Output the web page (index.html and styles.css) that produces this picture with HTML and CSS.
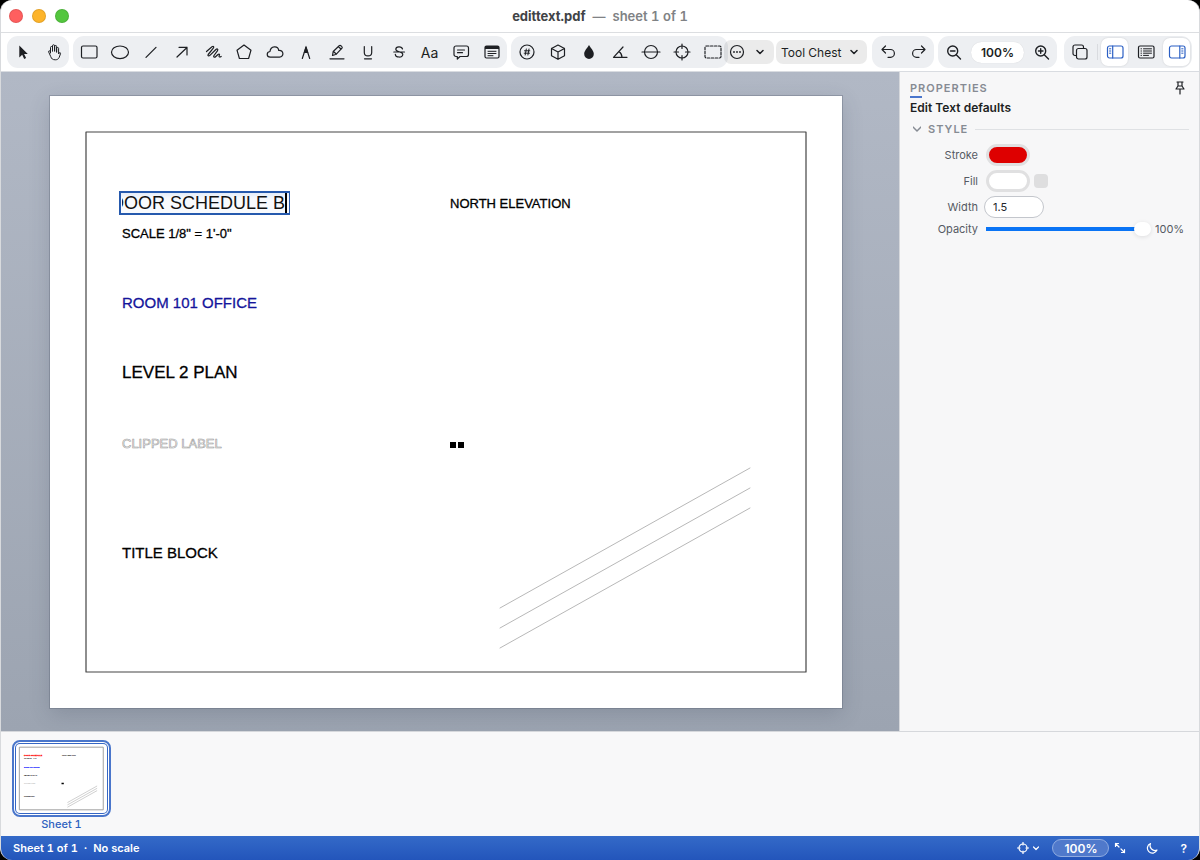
FILE: index.html
```html
<!DOCTYPE html>
<html lang="en">
<head>
<meta charset="utf-8">
<title>edittext.pdf — sheet 1 of 1</title>
<link rel="stylesheet" href="styles.css">
</head>
<body>
<div class="window">
  <header class="titlebar">
    <div class="lights">
      <button class="light light-close" aria-label="Close"></button>
      <button class="light light-min" aria-label="Minimize"></button>
      <button class="light light-max" aria-label="Zoom window"></button>
    </div>
    <h1 class="title">edittext.pdf <span class="title-sub">&nbsp;—&nbsp; sheet 1 of 1</span></h1>
  </header>

  <nav class="toolbar" aria-label="Tools">
    <div class="group">
      <button class="tool" aria-label="Select"><svg class="icon" viewBox="0 0 20 20"><path class="solid" d="M6.300 3.500v12l2.900-2.700 2 4.200 1.900-.9-2-4h3.700z"/></svg></button>
      <button class="tool" aria-label="Pan"><svg class="icon thin" viewBox="0 0 20 20"><path d="M6.500 11V5.500a1 1 0 0 1 2 0V9M8.500 9V3.800a1 1 0 0 1 2.100 0V9M10.600 9V4.500a1 1 0 0 1 2 0V10M12.600 10V6.500a1 1 0 0 1 2 0V12l.6-1c.6-.9 1.600-.3 1.300.7l-1.300 3.700c-.8 1.600-1.900 2.400-3.900 2.400-2.700 0-3.800-1-4.600-3.300L4.600 9.800c-.3-1 .9-1.500 1.400-.6l.5 1.300"/></svg></button>
    </div>

    <div class="group">
      <button class="tool" aria-label="Rectangle"><svg class="icon" viewBox="0 0 20 20"><rect x="2.500" y="4" width="15.500" height="12" rx="1.500"/></svg></button>
      <button class="tool" aria-label="Ellipse"><svg class="icon" viewBox="0 0 20 20"><ellipse cx="10" cy="10.300" rx="8.500" ry="6.300"/></svg></button>
      <button class="tool" aria-label="Line"><svg class="icon" viewBox="0 0 20 20"><path d="M5 15.300 15 5.300"/></svg></button>
      <button class="tool" aria-label="Arrow"><svg class="icon" viewBox="0 0 20 20"><path d="M5 15 15 5.500M7 5.300h8V13"/></svg></button>
      <button class="tool" aria-label="Scribble"><svg class="icon" viewBox="0 0 20 20"><path d="M3.500 9.500 9 4.700c1.500-1 2.300.2 1.300 1.500L5.200 12.500c-.8 1.300.5 2 1.700.8l6-5.800c1.500-1.200 2.500 0 1.500 1.300L11 13.500c-1 1.600.5 2.300 1.800 1l2.200-2c1.200-1 2 0 1.200 1.200-.6 1.200.5 1.800 2 .8"/></svg></button>
      <button class="tool" aria-label="Polygon"><svg class="icon" viewBox="0 0 20 20"><path d="M10 3 17 8.200 14.600 16.500H5.400L3 8.200z"/></svg></button>
      <button class="tool" aria-label="Cloud"><svg class="icon" viewBox="0 0 20 20"><path d="M5.300 15.200C1.300 15 1.200 10 5 9.500 5.600 3.700 13 3.500 13.700 8.300c5.300-.4 5.600 6.700.8 6.900z"/></svg></button>
      <button class="tool" aria-label="Pen"><svg class="icon" viewBox="0 0 20 20"><path d="M6.300 16.500 10 5l3.700 11.500"/><path class="solid" d="M10 3.500 7.700 11h4.600z"/></svg></button>
      <button class="tool" aria-label="Highlight"><svg class="icon" viewBox="0 0 20 20"><path d="M3 16.800h14M5.500 13.500l.7-4 6-5.800c1.200-1 3.800 1.200 2.800 2.500l-5.700 6zM6.500 9.500l3 2.700M11.500 4.800l2.700 2.400"/></svg></button>
      <button class="tool" aria-label="Underline"><svg class="icon" viewBox="0 0 20 20"><path d="M6.300 4.500v6c0 4.600 7.400 4.600 7.400 0v-6M6.500 16.800h7"/></svg></button>
      <button class="tool" aria-label="Strikethrough"><svg class="icon" viewBox="0 0 20 20"><path d="M13.500 7c-.7-3-6.700-2.700-6.700.3 0 3.200 7 1.600 7 5.200 0 3.400-7 3.400-7.500-.2M4.800 10h10.700"/></svg></button>
      <button class="tool tool-text" aria-label="Text">Aa</button>
      <button class="tool" aria-label="Comment"><svg class="icon" viewBox="0 0 20 20"><path d="M5 4h10.500a2 2 0 0 1 2 2v6.500a2 2 0 0 1-2 2H9L6.300 17v-2.500H5a2 2 0 0 1-2-2V6a2 2 0 0 1 2-2zM6.500 8h7M6.500 10.700h5"/></svg></button>
      <button class="tool" aria-label="Note"><svg class="icon" viewBox="0 0 20 20"><rect x="3" y="4" width="14" height="12" rx="1.500"/><path class="solid" d="M3 4h14v3H3z"/><path class="thin" d="M6 9.300h8M6 11.500h8M6 13.700h5"/></svg></button>
    </div>

    <div class="group group-measure">
      <button class="tool" aria-label="Count"><svg class="icon" viewBox="0 0 20 20"><circle cx="10" cy="10" r="7"/><path class="thin" d="M9.300 7 8.200 13M12 7l-1.100 6M7.500 8.800h5.300M7.200 11.200h5.300"/></svg></button>
      <button class="tool" aria-label="Volume"><svg class="icon" viewBox="0 0 20 20"><path d="M10 3l6.500 3.500v7.300L10 17.300l-6.500-3.500V6.500zM3.500 6.500 10 10l6.500-3.500M10 10v7.300"/></svg></button>
      <button class="tool" aria-label="Fill color"><svg class="icon" viewBox="0 0 20 20"><path class="solid" d="M10 3c2 3.500 4.800 5.800 4.800 9a4.800 5 0 0 1-9.600 0c0-3.200 2.800-5.500 4.800-9z"/></svg></button>
      <button class="tool" aria-label="Angle"><svg class="icon" viewBox="0 0 20 20"><path d="M13 5 3.500 15.300H17M9 9.500c2 1.500 3 3.500 3 5.800"/></svg></button>
      <button class="tool" aria-label="Diameter"><svg class="icon" viewBox="0 0 20 20"><circle cx="10" cy="10" r="6.500"/><path d="M1 10h18"/></svg></button>
      <button class="tool" aria-label="Calibrate"><svg class="icon" viewBox="0 0 20 20"><circle cx="10" cy="10" r="6"/><path d="M10 2v4.500M10 13.500V18M2 10h4.500M13.500 10H18"/></svg></button>
      <button class="tool" aria-label="Snapshot"><svg class="icon" viewBox="0 0 20 20"><rect x="2" y="4" width="16" height="12" rx="1.500" stroke-dasharray="2.500 1.500"/></svg></button>
    </div>

    <button class="menu menu-more" aria-label="More tools"><svg class="icon" viewBox="0 0 20 20"><circle cx="10" cy="10" r="6.500"/><path class="dots" d="M7 10h0M10 10h0M13 10h0"/></svg><svg class="chevron" viewBox="0 0 8 8"><path d="M1 2.500 4 5.500 7 2.500"/></svg></button>
    <button class="menu menu-chest">Tool Chest<svg class="chevron" viewBox="0 0 8 8"><path d="M1 2.500 4 5.500 7 2.500"/></svg></button>

    <div class="group group-history">
      <button class="tool" aria-label="Undo"><svg class="icon" viewBox="0 0 20 20"><path d="M7.500 4 4 7.500 7.500 11M4 7.500h8.500a3.900 3.900 0 0 1 0 7.800H10"/></svg></button>
      <button class="tool" aria-label="Redo"><svg class="icon" viewBox="0 0 20 20"><path d="M12.500 4 16 7.500 12.500 11M16 7.500H7.500a3.900 3.900 0 0 0 0 7.800H10"/></svg></button>
    </div>

    <div class="group">
      <button class="tool" aria-label="Zoom out"><svg class="icon lens" viewBox="0 0 20 20"><circle cx="8.700" cy="9" r="5"/><path d="M12.500 13l4 4M6.500 9h4.500"/></svg></button>
      <button class="zoom-value">100%</button>
      <button class="tool" aria-label="Zoom in"><svg class="icon lens" viewBox="0 0 20 20"><circle cx="8.700" cy="9" r="5"/><path d="M12.500 13l4 4M6.500 9h4.500M8.700 6.700v4.500"/></svg></button>
    </div>

    <div class="group group-views">
      <button class="tool" aria-label="Windows"><svg class="icon" viewBox="0 0 20 20"><rect x="6.500" y="6.500" width="10.500" height="10.500" rx="2"/><path d="M6.500 13.500H5a2 2 0 0 1-2-2V5a2 2 0 0 1 2-2h6.500a2 2 0 0 1 2 2v1.500"/></svg></button>
      <span class="divider"></span>
      <button class="tool tool-on" aria-label="Left panel" aria-pressed="true"><svg class="icon" viewBox="0 0 20 20"><rect x="2.500" y="4" width="15.500" height="12" rx="2"/><path d="M7.700 4v12"/><path class="thin" d="M4.500 6.800h1.300M4.500 9h1.300M4.500 11.200h1.300"/></svg></button>
      <button class="tool" aria-label="Markup list"><svg class="icon" viewBox="0 0 20 20"><rect x="2.500" y="4" width="15.500" height="12" rx="1.500"/><path class="thin" d="M5 6.800h.5M7.500 6.800h8M5 9h.5M7.500 9h8M5 11.200h.5M7.500 11.200h8M5 13.400h.5M7.500 13.400h5"/></svg></button>
      <button class="tool tool-on" aria-label="Right panel" aria-pressed="true"><svg class="icon" viewBox="0 0 20 20"><rect x="2.500" y="4" width="15.500" height="12" rx="2"/><path d="M12.800 4v12"/><path class="thin" d="M14.700 6.800H16M14.700 9H16M14.700 11.200H16"/></svg></button>
    </div>
  </nav>

  <div class="workspace">
    <main class="canvas">
      <div class="page">
        <svg class="sheet" viewBox="0 0 792 612" role="img" aria-label="Sheet 1">
          <rect class="frame" x="36" y="36" width="720" height="540"/>
          <path class="hatch" d="M450 512 700 372M450 532 700 392M450 552 700 412"/>
          <path class="block" d="M400 346h6v6h-6zM408 346h6v6h-6z"/>
          <g class="labels">
            <text x="400" y="112" class="t13">NORTH ELEVATION</text>
            <text x="72" y="142" class="t13">SCALE 1/8" = 1'-0"</text>
            <text x="72" y="212" class="t15 blue">ROOM 101 OFFICE</text>
            <text x="72" y="282" class="t17">LEVEL 2 PLAN</text>
            <text x="72" y="352" class="t13 outline">CLIPPED LABEL</text>
            <text x="72" y="462" class="t15">TITLE BLOCK</text>
          </g>
        </svg>
        <div class="edit-box">
          <input class="edit-input" type="text" value="DOOR SCHEDULE B" aria-label="Edit text">
          <span class="caret"></span>
        </div>
      </div>
    </main>

    <aside class="panel">
      <div class="panel-head">
        <h2 class="panel-title">PROPERTIES</h2>
        <button class="pin" aria-label="Pin panel"><svg class="pin-icon" viewBox="0 0 12 14"><path d="M3 1h6M4 1v4L2 8h8L8 5V1M4 5h4M6 8v5"/></svg></button>
      </div>
      <h3 class="panel-subject">Edit Text defaults</h3>
      <button class="section"><svg class="chevron" viewBox="0 0 8 8"><path d="M0 2 4 6 8 2"/></svg><span>STYLE</span><span class="rule"></span></button>
      <div class="fields">
        <label for="stroke">Stroke</label>
        <div class="row"><button id="stroke" class="swatch swatch-red"></button></div>
        <label for="fill">Fill</label>
        <div class="row"><button id="fill" class="swatch"></button><input class="fill-on" type="checkbox" aria-label="Use fill"></div>
        <label for="width">Width</label>
        <div class="row"><input id="width" class="number" type="text" value="1.5"></div>
        <label for="opacity">Opacity</label>
        <div class="row"><input id="opacity" class="slider" type="range" min="0" max="100" value="100"><span class="percent">100%</span></div>
      </div>
    </aside>
  </div>

  <section class="strip" aria-label="Sheets">
    <button class="thumb">
      <span class="thumb-frame">
        <svg class="thumb-page" viewBox="0 0 792 612" aria-hidden="true">
          <rect class="thumb-border" x="36" y="36" width="720" height="540"/>
          <path class="thumb-hatch" d="M450 512 700 372M450 532 700 392M450 552 700 412"/>
          <path class="block" d="M396 342h20v14h-20z"/>
          <g class="labels">
            <text x="72" y="112" class="t18 thumb-red">DOOR SCHEDULE</text>
            <text x="400" y="112" class="t13">NORTH ELEVATION</text>
            <text x="72" y="142" class="t13">SCALE 1/8" = 1'-0"</text>
            <text x="72" y="212" class="t15 thumb-blue">ROOM 101 OFFICE</text>
            <text x="72" y="282" class="t17">LEVEL 2 PLAN</text>
            <text x="72" y="352" class="t13 outline">CLIPPED LABEL</text>
            <text x="72" y="462" class="t15">TITLE BLOCK</text>
          </g>
        </svg>
      </span>
      <span class="thumb-name">Sheet 1</span>
    </button>
  </section>

  <footer class="status">
    <span class="status-text">Sheet 1 of 1 &nbsp;·&nbsp; No scale</span>
    <button class="status-btn status-snap" aria-label="Snap"><svg class="status-icon" viewBox="0 0 12 12"><circle cx="6" cy="6" r="4"/><path d="M6 0v3M6 9v3M0 6h3M9 6h3"/></svg><svg class="status-chevron" viewBox="0 0 8 8"><path d="M1.500 3 4 5.500 6.500 3"/></svg></button>
    <button class="status-zoom">100%</button>
    <button class="status-btn status-fit" aria-label="Fit"><svg class="status-icon" viewBox="0 0 12 12"><path d="M1.500 4.500v-3h3M1.500 1.500 5 5M10.500 7.500v3h-3M10.500 10.500 7 7"/></svg></button>
    <button class="status-btn status-theme" aria-label="Dark mode"><svg class="status-icon" viewBox="0 0 12 12"><path d="M4.500 1.500a5 5 0 1 0 6.500 6.600A5 5 0 0 1 4.500 1.500z"/></svg></button>
    <button class="status-btn status-help" aria-label="Help">?</button>
  </footer>
</div>
</body>
</html>
```
FILE: styles.css
```css
* { box-sizing: border-box; }

html, body { height: 100%; }

body {
  margin: 0;
  background: #000;
  font-family: Inter, "Liberation Sans", sans-serif;
  font-size: 12px;
  font-variant-numeric: tabular-nums;
  color: #1d1f23;
}

button, input { font: inherit; font-variant-numeric: inherit; color: inherit; }

button {
  margin: 0;
  padding: 0;
  border: 0;
  background: none;
}

h1, h2, h3 { margin: 0; }

svg {
  display: block;
  fill: none;
  stroke: currentColor;
  stroke-width: 1.2;
  stroke-linecap: round;
  stroke-linejoin: round;
}

.window {
  display: flex;
  flex-direction: column;
  height: 100vh;
  overflow: hidden;
  border-radius: 12px;
  background: #fff;
  border-left: 1px solid #d8dadd;
  border-right: 1px solid #d8dadd;
}

/* Title bar */
.titlebar {
  display: grid;
  grid-template-columns: 1fr auto 1fr;
  align-items: center;
  flex: none;
  height: 33px;
  padding: 0 8px;
  border-bottom: 1px solid #dcdee1;
}
.lights { display: flex; gap: 9px; }
.light {
  width: 14px;
  height: 14px;
  border-radius: 50%;
  border: 1px solid rgba(0, 0, 0, .1);
}
.light-close { background: #ff5f5f; }
.light-min { background: #fdb42a; }
.light-max { background: #53c63e; }
.title { font-size: 13px; font-weight: 700; color: #414346; }
.title-sub { color: #808285; font-weight: 600; }

/* Toolbar */
.toolbar {
  display: flex;
  align-items: center;
  flex: none;
  height: 39px;
  padding: 0 7px 0 6px;
  border-bottom: 1px solid #d9dce1;
}
.group {
  display: flex;
  align-items: center;
  flex: none;
  gap: 4px;
  height: 32px;
  margin-right: 4px;
  padding: 0 2px;
  border-radius: 11px;
  background: #edeff2;
}
.tool {
  display: flex;
  align-items: center;
  justify-content: center;
  flex: none;
  width: 27px;
  height: 28px;
  border-radius: 7px;
}
.tool-text { font-size: 14px; }
.tool-on {
  color: #2a5fc4;
  background: #fff;
  box-shadow: 0 0 2px rgba(0, 0, 0, .15);
}
.icon { width: 20px; height: 20px; }
.thin { stroke-width: 1; }
.lens { stroke-width: 1.4; }
.solid { fill: currentColor; stroke-width: 0; }
.dots { stroke-width: 1.8; }
.chevron { width: 8px; height: 8px; stroke-width: 1.5; }

.group-measure { margin-right: 0; }
.menu {
  display: flex;
  align-items: center;
  justify-content: space-between;
  flex: none;
  height: 24px;
  border-radius: 7px;
  background: rgba(0, 0, 0, .08);
}
.menu-more { width: 50px; margin-left: -4px; margin-right: 2px; padding: 0 10px 0 3px; }
.menu-chest { width: 91px; margin-right: 5px; padding: 0 9px 0 5px; }
.zoom-value {
  width: 53px;
  height: 21px;
  border-radius: 11px;
  background: #fff;
  font-weight: 600;
  font-variant-numeric: normal;
  box-shadow: 0 0 1px rgba(0, 0, 0, .15);
}
.group-views { margin-left: auto; margin-right: 0; }
.divider { width: 1px; height: 16px; margin-right: -1px; background: #d9dbdf; }

/* Workspace */
.workspace { display: flex; flex: 1; min-height: 0; }
.canvas {
  flex: 1;
  min-width: 0;
  padding: 24px 49px;
  overflow: hidden;
  background: linear-gradient(#b1b8c5, #9ca4b1);
}
.page {
  position: relative;
  width: 792px;
  background: #fff;
  box-shadow: 0 0 0 1px rgba(90, 98, 115, .35), 0 6px 20px rgba(50, 60, 80, .2);
}
.sheet { width: 100%; height: auto; }
.frame { stroke: #444; }
.hatch { stroke: #b8b8b8; stroke-width: 1; }
.block { fill: #000; stroke: none; }
.labels {
  font-family: "Liberation Sans", sans-serif;
  fill: #000;
  stroke: #000;
  stroke-width: .3;
}
.t13 { font-size: 13px; }
.t15 { font-size: 15px; }
.t17 { font-size: 17px; }
.t18 { font-size: 18px; }
.blue { fill: #15159b; stroke: #15159b; }
.outline { fill: #fff; stroke: #999; stroke-width: .6; }

.edit-box {
  position: absolute;
  left: 69px;
  top: 95px;
  display: flex;
  align-items: center;
  width: 171px;
  height: 24px;
  padding: 0 2px 0 1px;
  border: 2px solid #2559ad;
  border-right-width: 1px;
  background: linear-gradient(#e3ecf9, #f8fafd 6px);
}
.edit-input {
  flex: 1;
  min-width: 0;
  height: 20px;
  padding: 0;
  border: 0;
  outline: 0;
  background: none;
  font-family: "Liberation Sans", sans-serif;
  font-size: 18px;
  color: #111;
  direction: rtl;
}
.caret { width: 2px; height: 20px; background: #000; }

/* Properties panel */
.panel {
  display: flex;
  flex-direction: column;
  flex: none;
  width: 300px;
  padding: 9px 10px;
  border-left: 1px solid #d6d8dc;
  background: #f7f7f8;
}
.panel-head { display: flex; justify-content: space-between; align-items: flex-start; }
.panel-title {
  position: relative;
  padding-bottom: 2px;
  font-size: 11px;
  line-height: 15px;
  font-weight: 600;
  letter-spacing: 1px;
  color: #868b93;
}
.panel-title::after {
  content: "";
  position: absolute;
  left: 0;
  bottom: 0;
  width: 12px;
  height: 2px;
  background: #4a76cc;
}
.pin { padding: 0 3px; }
.pin-icon { width: 12px; height: 14px; }
.panel-subject { margin-top: 2px; font-size: 12px; line-height: 16px; font-weight: 600; }
.section {
  display: flex;
  align-items: center;
  gap: 7px;
  height: 16px;
  margin: 5px 0;
  padding-left: 3px;
  font-size: 11px;
  font-weight: 600;
  letter-spacing: 1px;
  color: #868b93;
}
.rule { flex: 1; height: 1px; background: #dfe1e4; }
.fields {
  display: grid;
  grid-template-columns: 68px 1fr;
  grid-template-rows: 26px 26px 26px 18px;
  column-gap: 6px;
  align-items: center;
  font-size: 11px;
  font-variant-numeric: normal;
  color: #555a63;
}
.fields label { text-align: right; }
.row { display: flex; align-items: center; gap: 4px; }
.swatch {
  width: 44px;
  height: 22px;
  margin-left: 2px;
  border: 3px solid #e0e0e1;
  border-radius: 11px;
  background: #fff;
}
.swatch-red { background: #de0000; }
.fill-on {
  appearance: none;
  width: 14px;
  height: 14px;
  margin: 0;
  border-radius: 4px;
  background: #dededf;
}
.number {
  width: 60px;
  height: 22px;
  padding: 0 8px;
  border: 1px solid #c3c6cc;
  border-radius: 11px;
  background: #fff;
  color: #24262a;
}
.slider {
  appearance: none;
  flex: none;
  width: 165px;
  height: 16px;
  margin: 0 0 0 2px;
  background: linear-gradient(#0a74f5, #0a74f5) no-repeat left center / 155px 4px;
}
.slider::-webkit-slider-thumb {
  appearance: none;
  width: 17px;
  height: 14px;
  border-radius: 7px;
  background: #fff;
  box-shadow: 0 1px 4px rgba(0, 0, 0, .1);
}

/* Sheet strip */
.strip {
  display: flex;
  flex: none;
  height: 105px;
  padding: 8px 11px;
  border-top: 1px solid #d6d8dc;
  background: #f8f8f9;
}
.thumb { display: flex; flex-direction: column; align-items: center; justify-content: flex-start; }
.thumb-frame {
  padding: 1px;
  border: 2px solid #4a76cb;
  border-radius: 8px;
  background: #fff;
}
.thumb-page {
  width: 93px;
  height: 71px;
  border-radius: 5px;
  box-shadow: inset 0 0 0 1px #3566c4;
}
.thumb-border { stroke: #999; stroke-width: 8; }
.thumb-hatch { stroke: #bbb; stroke-width: 6; }
.thumb-red { fill: #f22; stroke: #f22; stroke-width: 3; }
.thumb-blue { fill: #33f; stroke: #33f; stroke-width: 2; }
.thumb-name { line-height: 14px; font-size: 11px; font-weight: 500; color: #2f62bf; }

/* Status bar */
.status {
  display: flex;
  align-items: center;
  flex: none;
  height: 24px;
  padding: 0 12px;
  background: linear-gradient(#346ac8, #2355bb);
  color: #fff;
  font-size: 11px;
  font-weight: 600;
}
.status-text { margin-right: auto; }
.status-btn { display: flex; align-items: center; gap: 3px; }
.status-icon { width: 12px; height: 12px; }
.status-chevron { width: 8px; height: 8px; }
.status-snap { margin-right: 12px; }
.status-zoom {
  width: 57px;
  height: 18px;
  margin-right: 5px;
  border: 1px solid #8fabe0;
  border-radius: 9px;
  background: #5079cb;
  font-size: 12px;
  font-variant-numeric: normal;
}
.status-fit { margin-right: 20px; }
.status-theme { margin-right: 22px; }
.status-help { font-size: 12px; }
```
